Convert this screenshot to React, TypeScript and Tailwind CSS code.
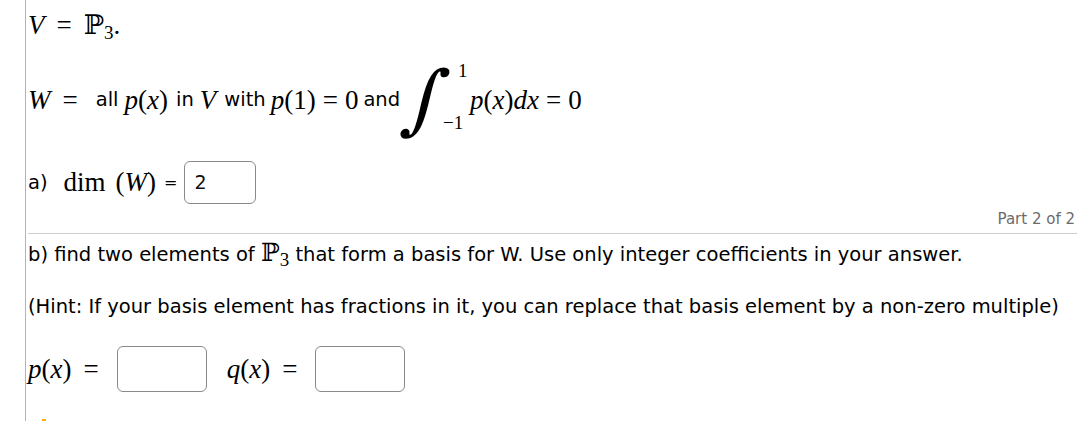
import React from 'react';

const serif = { fontFamily: '"Liberation Serif", "DejaVu Serif", serif' };

function MI({ children }: { children: React.ReactNode }) {
  return <span className="italic" style={serif}>{children}</span>;
}

function MR({ children, className = '' }: { children: React.ReactNode; className?: string }) {
  return <span className={className} style={serif}>{children}</span>;
}

function Eq({ className = 'mx-[12px]' }: { className?: string }) {
  return <MR className={className}>=</MR>;
}

function P3() {
  return (
    <span style={serif} className="whitespace-nowrap">
      <span style={{ fontFamily: '"DejaVu Serif", serif' }} className="font-light">ℙ</span>
      <span className="text-[19px] relative top-[5px]">3</span>
    </span>
  );
}

function Px({ v = 'p' }: { v?: string }) {
  return (
    <span className="whitespace-nowrap">
      <MI>{v}</MI>
      <MR>(</MR>
      <MI>x</MI>
      <MR>)</MR>
    </span>
  );
}

function Box({ value = '', w = 'w-[90px]', h = 'h-[46px]' }: { value?: string; w?: string; h?: string }) {
  return (
    <div className={`${w} ${h} border border-[#8a8a8a] rounded-[6px] flex items-center px-[9px] text-[19px] text-[#111]`}>
      {value}
    </div>
  );
}

export default function App() {
  return (
    <div
      className="w-[1077px] h-[421px] bg-white text-black overflow-hidden"
      style={{ fontFamily: '"DejaVu Sans", sans-serif' }}
    >
      <div className="ml-[25px] h-full border-l border-[#f4b400] pl-[2px] relative">
        {/* V = P3 */}
        <div className="h-[50px] text-[27px] flex items-center">
          <MI>V</MI>
          <Eq />
          <span>
            <P3 />
            <MR>.</MR>
          </span>
        </div>

        {/* W row */}
        <div className="mt-[13px] h-[74px] flex items-center text-[27px]">
          <MI>W</MI>
          <Eq className="ml-[12px] mr-[18px]" />
          <span className="text-[19.5px]">all</span>
          <span className="ml-[6px]"><Px /></span>
          <span className="ml-[8px] text-[19.5px]">in</span>
          <span className="ml-[6px]"><MI>V</MI></span>
          <span className="ml-[8px] text-[19.5px]">with</span>
          <span className="ml-[5px]">
            <MI>p</MI>
            <MR>(1)</MR>
          </span>
          <Eq className="mx-[7px]" />
          <MR>0</MR>
          <span className="ml-[5px] text-[19.5px]">and</span>
          <span className="ml-[6px] relative w-[64px] h-[74px] shrink-0">
            <span
              className="absolute left-[0px] top-[-14px] text-[76px] leading-[100px] -skew-x-12"
              style={{ fontFamily: '"DejaVu Serif", serif' }}
            >
              ∫
            </span>
            <span className="absolute left-[52px] top-[-6px] text-[19px]" style={serif}>1</span>
            <span className="absolute left-[37px] top-[46px] text-[19px]" style={serif}>−1</span>
          </span>
          <span>
            <Px />
            <MI>dx</MI>
          </span>
          <Eq className="mx-[7px]" />
          <MR>0</MR>
        </div>

        {/* a) */}
        <div className="mt-[24px] flex items-center h-[43px]">
          <span className="text-[19.5px]">a)</span>
          <MR className="ml-[16px] text-[27px]">dim</MR>
          <span className="ml-[10px] text-[27px]">
            <MR>(</MR>
            <MI>W</MI>
            <MR>)</MR>
          </span>
          <span className="ml-[8px] mr-[7px] text-[16px]">=</span>
          <Box value="2" w="w-[72px]" h="h-[43px]" />
        </div>

        {/* Part 2 of 2 */}
        <div className="mt-[5px] flex justify-end pr-[2px] text-[15px] text-[#6b6b6b] leading-[20px]">
          Part 2 of 2
        </div>
        <div className="mt-[4px] border-t border-[#cccccc]" />

        <div className="mt-[5px] text-[19.5px] leading-[28px] flex items-baseline whitespace-nowrap">
          <span>b) find two elements of&nbsp;</span>
          <span className="text-[25px] leading-[28px]"><P3 /></span>
          <span>&nbsp;that form a basis for W. Use only integer coefficients in your answer.</span>
        </div>

        <div className="mt-[24px] text-[19.5px] leading-[28px] whitespace-nowrap">
          (Hint: If your basis element has fractions in it, you can replace that basis element by a non-zero multiple)
        </div>

        <div className="mt-[25px] flex items-center text-[27px]">
          <Px />
          <Eq />
          <div className="ml-[6px]"><Box /></div>
          <span className="ml-[20px]"><Px v="q" /></span>
          <Eq />
          <div className="ml-[6px]"><Box /></div>
        </div>

        <div className="absolute left-[16px] bottom-0 w-[4px] h-[2px] bg-[#f4b400]" />
      </div>
    </div>
  );
}
